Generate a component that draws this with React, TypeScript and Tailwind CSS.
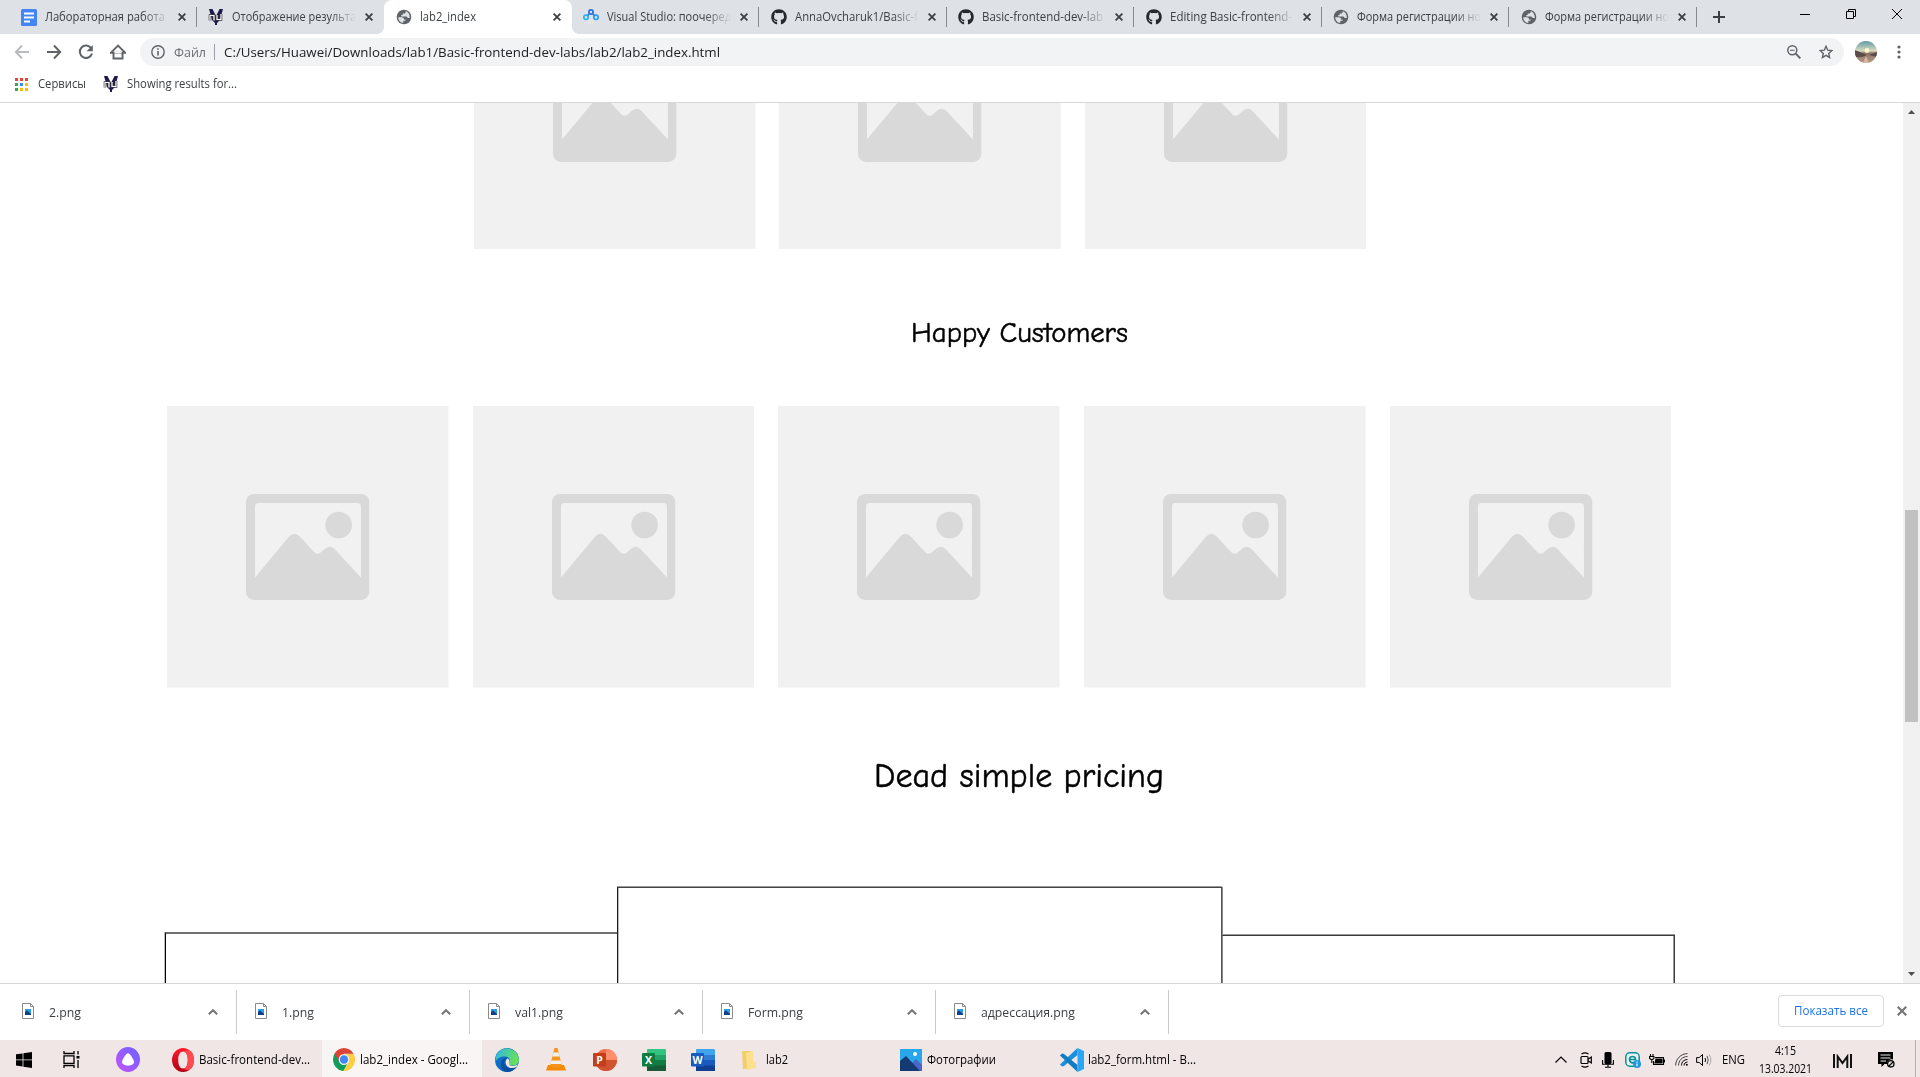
import React, { useLayoutEffect, useRef, useState } from "react";
import { FaGithub } from "react-icons/fa";

/** Single-line label scaled horizontally so that it fills exactly `w` pixels. */
function Fit({ w, children, className = "" }: { w: number; children: string; className?: string }) {
  const ref = useRef<HTMLSpanElement>(null);
  const [scale, setScale] = useState(1);
  useLayoutEffect(() => {
    if (ref.current && ref.current.offsetWidth) {
      setScale(w / ref.current.getBoundingClientRect().width);
    }
  }, []);
  return (
    <span className={"block shrink-0 whitespace-nowrap " + className} style={{ width: w }}>
      <span ref={ref} className="inline-block origin-left" style={{ transform: `scaleX(${scale})` }}>
        {children}
      </span>
    </span>
  );
}

const DocsIcon = () => (
  <svg width="16" height="17" viewBox="0 0 16 17" className="shrink-0">
    <rect width="16" height="17" rx="1.5" fill="#4285f4" />
    <path d="M3 4.5h10M3 8.5h10M3 12.5h6" stroke="#fff" strokeWidth="1.8" />
  </svg>
);

const NuIcon = () => (
  <svg width="16" height="18" viewBox="0 0 16 18" className="shrink-0">
    <path d="M1 1h3.500l3.500 7 3.500-7H15l-3 11-3 3v2H7v-2l-3-3z" fill="#1f1b4d" />
    <path d="M2 12.500V7.500h4V12.500M9 7v4.500h4V6" stroke="#3a3a42" strokeWidth="2.600" fill="none" />
    <path d="M2 12.500V7.500h4V12.500M9 7v4.500h4V6" stroke="#fff" strokeWidth="1.200" fill="none" />
  </svg>
);

const GlobeIcon = () => (
  <svg width="16" height="16" viewBox="0 0 16 16" className="shrink-0">
    <circle cx="8" cy="8" r="7.300" fill="#5f6368" />
    <path
      d="M2.200 8.300h3.600c1.400 0 2.200.8 2.200 2.100h1.500v1.400H7.300v2.300C4.600 13.900 2.300 11.400 2.200 8.300zM9.700 2.100v1c0 .8-.7 1.500-1.600 1.500H6.700v1.500H5.300v1.500h5.100l1.500 1.400h1.900C14 5.800 12.300 3 9.700 2.100z"
      fill="#dee1e6"
    />
  </svg>
);

const CloudIcon = () => (
  <svg width="16" height="16" viewBox="0 0 16 16" className="shrink-0" fill="none" strokeWidth="1.700">
    <circle cx="8" cy="3" r="2.100" stroke="#2b6fd6" />
    <circle cx="3" cy="8.300" r="2.200" stroke="#29b0f5" />
    <circle cx="13" cy="8.300" r="2.200" stroke="#2a9df0" />
    <path d="M6.300 4.800l-1.800 1.600M9.700 4.800l1.800 1.600" stroke="#2b7fe0" />
    <circle cx="8" cy="13" r="2" stroke="#e8e8e8" strokeWidth="1.200" />
  </svg>
);

const GhIcon = () => <FaGithub className="size-4 shrink-0 text-[#24292e]" />;

const Cross = ({ size = 8, color = "#3c4043", sw = 1.8 }: { size?: number; color?: string; sw?: number }) => (
  <svg width={size} height={size} viewBox="0 0 8 8" className="shrink-0">
    <path d="M.6.6l6.800 6.800M7.400.6L.6 7.400" stroke={color} strokeWidth={sw} />
  </svg>
);

type TabDef = { icon: React.ReactNode; title: string; w: number; active?: boolean; sep?: boolean };
const tabs: TabDef[] = [
  { icon: <DocsIcon />, title: "Лабораторная работа", w: 120, sep: true },
  { icon: <NuIcon />, title: "Отображение результа", w: 124 },
  { icon: <GlobeIcon />, title: "lab2_index", w: 56, active: true },
  { icon: <CloudIcon />, title: "Visual Studio: поочеред", w: 124, sep: true },
  { icon: <GhIcon />, title: "AnnaOvcharuk1/Basic-f", w: 123, sep: true },
  { icon: <GhIcon />, title: "Basic-frontend-dev-lab", w: 121, sep: true },
  { icon: <GhIcon />, title: "Editing Basic-frontend-", w: 122, sep: true },
  { icon: <GlobeIcon />, title: "Форма регистрации но", w: 124, sep: true },
  { icon: <GlobeIcon />, title: "Форма регистрации но", w: 124, sep: true },
];

function TabItem({ t }: { t: TabDef }) {
  return (
    <div
      className={
        "relative flex h-[34px] w-[187.500px] shrink-0 items-center pl-[11.500px] " +
        (t.active ? "rounded-t-lg bg-white" : "")
      }
    >
      {t.icon}
      <div
        className={
          "ml-2 w-[124px] " +
          (t.active ? "" : "[mask-image:linear-gradient(to_right,#000_98px,transparent_124px)]")
        }
      >
        <Fit w={t.w} className="text-xs leading-4 text-[#3c4043]">
          {t.title}
        </Fit>
      </div>
      <div className="ml-[9px]">
        <Cross />
      </div>
      {t.sep && <div className="absolute right-0 top-[7px] h-5 w-px bg-[#86898d]" />}
      {t.active && (
        <>
          <div className="absolute -left-2 bottom-0 size-2 bg-[radial-gradient(circle_at_0_0,transparent_8px,#fff_8px)]" />
          <div className="absolute -right-2 bottom-0 size-2 bg-[radial-gradient(circle_at_100%_0,transparent_8px,#fff_8px)]" />
        </>
      )}
    </div>
  );
}

function TabStrip() {
  return (
    <div className="flex h-[34px] items-center bg-[#dee1e6] pl-[9px]">
      {tabs.map((t, i) => (
        <TabItem key={i} t={t} />
      ))}
      <svg width="12" height="12" viewBox="0 0 12 12" className="ml-[16.500px]">
        <path d="M6 0v12M0 6h12" stroke="#3c4043" strokeWidth="2" />
      </svg>
      <div className="mb-[6px] ml-auto flex items-center gap-9 pr-[18px] text-black">
        <svg width="10" height="10" viewBox="0 0 10 10">
          <path d="M0 5.500h10" stroke="#000" />
        </svg>
        <svg width="10" height="10" viewBox="0 0 10 10" fill="none" stroke="#000">
          <path d="M.5 2.500h7v7h-7zM2.500 2.500v-2h7v7h-2" />
        </svg>
        <svg width="10" height="10" viewBox="0 0 10 10">
          <path d="M0 0l10 10M10 0L0 10" stroke="#000" />
        </svg>
      </div>
    </div>
  );
}

function Toolbar() {
  return (
    <div className="flex h-9 items-center bg-white pl-[14px]">
      <div className="flex gap-4">
        <svg width="16" height="16" viewBox="0 0 16 16" fill="none" stroke="#b9bbbe" strokeWidth="1.900">
          <path d="M15 8H2M8 1.500L1.800 8 8 14.500" />
        </svg>
        <svg width="16" height="16" viewBox="0 0 16 16" fill="none" stroke="#5f6368" strokeWidth="2">
          <path d="M1 8h13M8 1.500L14.200 8 8 14.500" />
        </svg>
        <svg width="16" height="16" viewBox="0 0 16 16" fill="none" stroke="#5f6368" strokeWidth="2">
          <path d="M13.200 4.300A6.200 6.200 0 1 0 14 9.500" />
          <path d="M14.800 1v6.200H8.600z" fill="#5f6368" stroke="none" />
        </svg>
        <svg width="16" height="16" viewBox="0 0 16 16" fill="none" stroke="#5f6368" strokeWidth="1.900">
          <path d="M3.500 8v6.500h9V8M1 8.700l7-7 7 7z" />
          <path d="M4.500 8.500h7" stroke="#fff" />
        </svg>
      </div>
      <div className="ml-[14px] flex h-7 w-[1704px] items-center rounded-full bg-[#f1f3f4] pl-[11px] pr-[11px]">
        <svg width="14" height="14" viewBox="0 0 14 14" fill="none" stroke="#5f6368" strokeWidth="1.400">
          <circle cx="7" cy="7" r="6.200" />
          <path d="M7 6v4.500M7 3.300v1.500" strokeWidth="1.600" />
        </svg>
        <Fit w={32} className="ml-[9px] text-[13.500px] leading-5 text-[#6b6f74]">
          Файл
        </Fit>
        <div className="ml-2 h-4 w-px bg-[#9aa0a6]" />
        <Fit w={496} className="ml-[9px] text-[13.500px] leading-5 text-[#202124]">
          C:/Users/Huawei/Downloads/lab1/Basic-frontend-dev-labs/lab2/lab2_index.html
        </Fit>
        <svg width="14" height="14" viewBox="0 0 14 14" fill="none" stroke="#5f6368" className="ml-auto">
          <circle cx="5.300" cy="5.300" r="4.500" strokeWidth="1.500" />
          <path d="M8.700 8.700l4.700 4.700" strokeWidth="1.900" />
          <path d="M3 5.300h4.600" strokeWidth="1.100" />
        </svg>
        <svg width="14" height="14" viewBox="0 0 14 14" fill="none" stroke="#5f6368" strokeWidth="1.400" className="ml-[18px]">
          <path d="M7 1.300l1.700 3.900 4.200.4-3.200 2.800.9 4.200L7 10.400l-3.600 2.200.9-4.200L1.100 5.600l4.200-.4z" />
        </svg>
      </div>
      <svg width="22" height="22" viewBox="0 0 22 22" className="ml-[11px]">
        <defs>
          <clipPath id="avatar">
            <circle cx="11" cy="11" r="11" />
          </clipPath>
          <linearGradient id="sky" x1="0" y1="0" x2="0" y2="1">
            <stop offset="0" stopColor="#5f98a4" />
            <stop offset=".45" stopColor="#d9dcc0" />
            <stop offset=".55" stopColor="#8d7467" />
            <stop offset="1" stopColor="#b59a83" />
          </linearGradient>
        </defs>
        <g clipPath="url(#avatar)">
          <rect width="22" height="22" fill="url(#sky)" />
          <path d="M0 9l7 3 5 2-5 2H0zM22 11l-8 3 8 2z" fill="#5a4c4a" />
          <circle cx="12" cy="9.500" r="2.400" fill="#fff6d0" />
          <path d="M8 22l3-7 3 7z" fill="#d8b7a6" />
        </g>
      </svg>
      <svg width="4" height="14" viewBox="0 0 4 14" fill="#5f6368" className="ml-[20px]">
        <circle cx="2" cy="2" r="1.600" />
        <circle cx="2" cy="7" r="1.600" />
        <circle cx="2" cy="12" r="1.600" />
      </svg>
    </div>
  );
}

const appColors = [
  "bg-[#ea4335]",
  "bg-[#ea4335]",
  "bg-[#ea4335]",
  "bg-[#34a853]",
  "bg-[#4285f4]",
  "bg-[#fbbc04]",
  "bg-[#34a853]",
  "bg-[#fbbc04]",
  "bg-[#fbbc04]",
];

function Bookmarks() {
  return (
    <div className="flex h-[33px] items-center border-b border-[#d5d7da] bg-white pb-1 pl-[15px]">
      <div className="grid grid-cols-3 gap-[2px]">
        {appColors.map((c, i) => (
          <div key={i} className={"size-[3px] " + c} />
        ))}
      </div>
      <Fit w={48} className="ml-[10px] text-xs leading-4 text-[#3c4043]">
        Сервисы
      </Fit>
      <div className="ml-[17px]">
        <NuIcon />
      </div>
      <Fit w={110} className="ml-2 text-xs leading-4 text-[#3c4043]">
        Showing results for...
      </Fit>
    </div>
  );
}

function Placeholder() {
  return (
    <svg width="281.600" height="281.600" viewBox="0 0 845 845" className="block shrink-0">
      <rect width="845" height="845" fill="#f1f1f1" />
      <rect x="237" y="264" width="370" height="318" rx="24" fill="#d9d9d9" />
      <path
        d="M274 291H571Q582 291 582 302V515L502 428Q489 417 476 427L462 439Q452 448 442 439L399 392Q382 375 366 392L264 515V302Q264 291 274 291Z"
        fill="#f1f1f1"
      />
      <circle cx="515" cy="357" r="40" fill="#d9d9d9" />
    </svg>
  );
}

function Page() {
  return (
    <main className="h-[880px] w-[1903px] overflow-hidden bg-white">
      <div className="-mt-[135.300px] flex gap-[23.600px] pl-[474.200px]">
        {[0, 1, 2].map((i) => (
          <Placeholder key={i} />
        ))}
      </div>
      <h2 className="mt-[63px] flex h-10 items-center pl-[911px] font-['Comic_Sans_MS','Comic_Neue','Open_Sans',sans-serif] text-[29px] text-black [-webkit-text-stroke:0.5px_#000]">
        <Fit w={217}>Happy Customers</Fit>
      </h2>
      <div className="mt-[53.900px] flex gap-[24.100px] pl-[167px]">
        {[0, 1, 2, 3, 4].map((i) => (
          <Placeholder key={i} />
        ))}
      </div>
      <h2 className="mt-16 flex h-12 items-center pl-[874px] font-['Comic_Sans_MS','Comic_Neue','Open_Sans',sans-serif] text-[35px] text-black [-webkit-text-stroke:0.5px_#000]">
        <Fit w={290}>Dead simple pricing</Fit>
      </h2>
      <div className="mt-[86.800px] flex items-start pl-[165px]">
        <div className="mt-[45px] h-60 w-[452px] border-l border-t-2 border-l-black border-t-[#707070] shadow-[-1px_0_0_#bbb]" />
        <div className="h-72 w-[605px] border border-b-0 border-l-[#1c1c1c] border-r-[#555] border-t-[#444] shadow-[0_-1px_0_#999,1px_0_0_#888,inset_1px_0_0_#bbb]" />
        <div className="mt-12 h-60 w-[453px] border-r border-t border-[#3c3c3c] shadow-[0_-1px_0_#999,inset_-1px_0_0_#999]" />
      </div>
    </main>
  );
}

function Scrollbar() {
  return (
    <div className="flex h-[880px] w-[17px] flex-col items-center bg-[#f1f1f1] pt-[7px]">
      <svg width="7" height="4" viewBox="0 0 7 4">
        <path d="M0 4L3.500 0 7 4z" fill="#505050" />
      </svg>
      <div className="mt-[396px] h-[212px] w-[13px] bg-[#c1c1c1]" />
      <svg width="7" height="4" viewBox="0 0 7 4" className="mb-[7px] mt-auto">
        <path d="M0 0l3.500 4L7 0z" fill="#505050" />
      </svg>
    </div>
  );
}

const downloads = [
  { name: "2.png", w: 32 },
  { name: "1.png", w: 32 },
  { name: "val1.png", w: 48 },
  { name: "Form.png", w: 55 },
  { name: "адрессация.png", w: 94 },
];

function Downloads() {
  return (
    <div className="flex h-[57px] items-center border-t border-[#d5d7da] bg-white pl-[4px]">
      {downloads.map((d) => (
        <div key={d.name} className="flex h-11 w-[233px] items-center border-r border-[#c9cbce] pl-[18px] pr-[18px]">
          <svg width="12" height="16" viewBox="0 0 12 16" className="-mt-[3px]">
            <path d="M.5.500h8l3 3v12H.500z" fill="#fff" stroke="#8b8b8b" />
            <path d="M8.500.500v3h3" fill="none" stroke="#8b8b8b" />
            <rect x="3" y="6" width="6" height="6" fill="#2a9be6" />
            <path d="M3 12V9l2-1.500L9 11v1z" fill="#123f80" />
          </svg>
          <Fit w={d.w} className="ml-[15px] text-[13px] leading-5 text-[#3c4043]">
            {d.name}
          </Fit>
          <svg width="10" height="6" viewBox="0 0 10 6" fill="none" stroke="#757575" strokeWidth="2" className="ml-auto">
            <path d="M.8 5.300L5 1.200l4.200 4.100" />
          </svg>
        </div>
      ))}
      <div className="-mt-0.5 ml-auto flex h-8 w-[106px] items-center justify-center rounded border border-[#dadce0]">
        <Fit w={74} className="text-xs font-medium leading-4 text-[#1a73e8]">
          Показать все
        </Fit>
      </div>
      <div className="mb-0.5 ml-[13px] mr-[13px]">
        <Cross size={10} color="#757575" sw={1.7} />
      </div>
    </div>
  );
}

const Office = ({ letter, tile, bands }: { letter: string; tile: string; bands: string[] }) => (
  <svg width="24" height="22" viewBox="0 0 24 22" className="shrink-0">
    {letter === "P" ? (
      <>
        <circle cx="13" cy="11" r="11" fill={bands[0]} />
        <path d="M13 0a11 11 0 0 1 11 11H13z" fill={bands[1]} />
        <path d="M2 11h22a11 11 0 0 1-22 0z" fill={bands[2]} />
      </>
    ) : (
      <>
        <rect x="5" width="19" height="22" rx="1" fill={bands[0]} />
        <path d="M5 6h19v16H5z" fill={bands[1]} />
        <path d="M5 11h19v11H5z" fill={bands[2]} />
        <path d="M5 16.500h19V22H5z" fill={bands[3]} />
      </>
    )}
    <rect y="4" width="13" height="13.500" rx="1" fill={tile} />
    <text x="6.500" y="14.500" textAnchor="middle" fontSize="10.500" fontWeight="700" fill="#fff" fontFamily="Open Sans, sans-serif">
      {letter}
    </text>
  </svg>
);

function Taskbar() {
  return (
    <div className="flex h-[37px] bg-[#f1e6e6] text-[12.500px] leading-4 text-black">
      <div className="flex w-[322px] items-center pl-4 pt-0.5">
        <svg width="16" height="16" viewBox="0 0 16 16">
          <path d="M0 2.300l6.600-.9v6.100H0zM7.400 1.300L16 0v7.500H7.400zM0 8.300h6.600v6.200L0 13.600zM7.400 8.300H16V16l-8.600-1.200z" />
        </svg>
        <svg width="17" height="17" viewBox="0 0 17 17" fill="none" stroke="#000" strokeWidth="1.300" className="ml-[31px]">
          <path d="M1 0v2.500h10V0M1 4.800h10v7.500H1zM1 17v-2.500h10V17M15 0v3.500M15 9v8" />
          <path d="M13.500 5h3v2.500h-3z" fill="#000" stroke="none" />
        </svg>
        <svg width="24" height="25" viewBox="0 0 24 24" preserveAspectRatio="none" className="ml-9">
          <defs>
            <linearGradient id="alice" x1="1" y1="0" x2="0" y2="1">
              <stop offset="0" stopColor="#6a62ff" />
              <stop offset="1" stopColor="#c454ff" />
            </linearGradient>
          </defs>
          <circle cx="12" cy="12" r="12" fill="url(#alice)" />
          <path d="M12 6c2 0 6 6.500 6 8.500S15.500 18 12 18s-6-1.500-6-3.500S10 6 12 6z" fill="#fff" />
        </svg>
        <svg width="22" height="24" viewBox="0 0 22 24" className="ml-8">
          <defs>
            <linearGradient id="opera" x1="0" y1="0" x2="0" y2="1">
              <stop offset="0" stopColor="#ff1b2d" />
              <stop offset="1" stopColor="#b00014" />
            </linearGradient>
          </defs>
          <path
            fillRule="evenodd"
            d="M11 0a11 12 0 1 0 0 24 11 12 0 0 0 0-24zm0 3.500c3 0 4.800 3.500 4.800 8.500s-1.800 8.500-4.800 8.500S6.200 17 6.200 12 8 3.500 11 3.500z"
            fill="url(#opera)"
          />
          <path d="M11 3.500c3-2 6-1.500 8-.5 2 2 3 5.500 3 9s-1 7-3 9c-2 1-5 1.500-8-.5 3 0 4.800-3.500 4.800-8.500S14 3.500 11 3.500z" fill="#ff4a50" />
        </svg>
        <Fit w={111} className="ml-[5px]">
          Basic-frontend-dev...
        </Fit>
      </div>
      <div className="flex w-40 items-center bg-[#f9f5f5] pl-[11px] pt-0.5">
        <svg width="22" height="23" viewBox="0 0 22 22" preserveAspectRatio="none">
          <path d="M11 11L1.500 5.500a11 11 0 0 0 9 16.500l4.500-8z" fill="#0f9d58" />
          <path d="M11 5.500h9.500A11 11 0 0 1 10.500 22L15.800 13.500z" fill="#ffcd40" />
          <path d="M1.500 5.500a11 11 0 0 1 19 0H11L6.500 13.500z" fill="#db4437" />
          <circle cx="11" cy="11" r="5.300" fill="#f1f1f1" />
          <circle cx="11" cy="11" r="4.100" fill="#4285f4" />
        </svg>
        <Fit w={108} className="ml-[5px]">
          lab2_index - Googl...
        </Fit>
      </div>
      <div className="flex flex-1 items-center pl-[13px] pt-0.5">
        <svg width="24" height="24" viewBox="0 0 24 24">
          <defs>
            <linearGradient id="edgeTop" x1="0" y1="0" x2="1" y2=".3">
              <stop offset="0" stopColor="#2fb5ea" />
              <stop offset="1" stopColor="#66e05a" />
            </linearGradient>
          </defs>
          <circle cx="12" cy="12" r="12" fill="#0f6fc4" />
          <path d="M.5 9A12 12 0 0 1 24 11.500c0 4-3 6-6.500 6-3 0-4.500-1-3-3 1.500-3-1-6-5-6C5.500 8.500 2 10 .5 14z" fill="url(#edgeTop)" />
          <path d="M13 9.500c-4 1-5 6-1.500 9 3 2.500 7 2 10.500-.5-1 2.500-5 6-10 6C5 24 4 14 9 10.500c1.500-1 3-1.200 4-1z" fill="#0c4f9e" />
          <path d="M12.500 10.500c2 1 2.500 3 1.700 4.500-.7 2 1 3.500 4 3 3-.3 4.800-1.500 5.300-3l-2 4c-3 1.500-7 1.500-9-.5-2.500-2.500-2.500-6 0-8z" fill="#f1e6e6" />
        </svg>
        <svg width="20" height="23" viewBox="0 0 20 23" className="ml-[27px]">
          <path d="M2 17h16l2 5.500H0z" fill="#f58a07" />
          <path d="M8.500 0h3L16 18c-3 2-9 2-12 0z" fill="#f7941d" />
          <path d="M7.500 4.500h5l1 4h-7zM5.400 12.500h9.200l.9 3.500h-11z" fill="#f0f0ee" />
        </svg>
        <div className="ml-[27px] flex gap-[25px]">
          <Office letter="P" tile="#c43e1c" bands={["#ed6c47", "#ff8f6b", "#d35230"]} />
          <Office letter="X" tile="#107c41" bands={["#33c481", "#21a366", "#107c41", "#185c37"]} />
          <Office letter="W" tile="#185abd" bands={["#41a5ee", "#2b7cd3", "#185abd", "#103f91"]} />
        </div>
        <svg width="14" height="20" viewBox="0 0 14 20" className="ml-[27px]">
          <path d="M0 1h9v18H1z" fill="#f3cd6a" />
          <path d="M4 3l7-2v10l3 1v6l-9 2z" fill="#fde08e" />
        </svg>
        <Fit w={22} className="ml-[10px]">
          lab2
        </Fit>
        <svg width="22" height="22" viewBox="0 0 22 22" className="ml-28">
          <rect width="22" height="22" fill="#28a8ea" />
          <path d="M12 14l4-4 6 6v6H12z" fill="#4b64c8" />
          <path d="M0 12l6-5 14 15H0z" fill="#143a74" />
          <circle cx="15" cy="5" r="2" fill="#fff" />
        </svg>
        <Fit w={69} className="ml-[5px]">
          Фотографии
        </Fit>
        <svg width="24" height="24" viewBox="0 0 24 24" className="ml-16">
          <path d="M17.500 0v7L4 18l-2 .5-2-2L17.500 0z" fill="#1a90dc" />
          <path d="M17.500 24v-7L4 6l-2-.5-2 2L17.500 24z" fill="#0f7cc4" />
          <path d="M17.500 0L24 3v18l-6.500 3z" fill="#2ba5f5" />
        </svg>
        <Fit w={108} className="ml-1">
          lab2_form.html - B...
        </Fit>
      </div>
      <div className="flex w-[365px] items-center pt-0.5">
        <svg width="12" height="7" viewBox="0 0 12 7" fill="none" stroke="#000" strokeWidth="1.200">
          <path d="M.5 6.500L6 1l5.500 5.500" />
        </svg>
        <svg width="12" height="16" viewBox="0 0 12 16" fill="none" stroke="#000" strokeWidth="1.200" className="ml-[13px]">
          <rect x="1" y="4.500" width="7" height="7" rx="1" />
          <path d="M8 7.200L11.300 5v6L8 8.800M1.500 2Q5-.2 8.500 2M1.500 14q3.500 2.200 7 0" />
        </svg>
        <svg width="12" height="16" viewBox="0 0 12 16" className="ml-[10px]">
          <rect x="2.500" width="7" height="12" rx="1.500" />
          <path d="M.6 8v4.300h10.800V8M6 12v3.300M3 15.300h6" fill="none" stroke="#000" strokeWidth="1.100" />
        </svg>
        <svg width="16" height="16" viewBox="0 0 16 16" className="ml-[11px]">
          <rect x=".8" y=".8" width="13.400" height="13.400" rx="4" fill="#e7f3f3" stroke="#0e8f98" strokeWidth="1.500" />
          <path d="M4.500 7.500h6C10.500 3.500 4.500 3.500 4.500 7.500c0 3.500 3.500 4 5.500 2.500" fill="none" stroke="#0e8f98" strokeWidth="1.700" />
          <circle cx="12" cy="12" r="4" fill="#2196e3" />
          <path d="M12 11.500v2.700M12 9.500v1.200" stroke="#fff" strokeWidth="1.200" />
        </svg>
        <svg width="16" height="12" viewBox="0 0 16 12" className="ml-[8px]" fill="none" stroke="#000" strokeWidth="1.100">
          <path d="M6 3.500h8.500v7H4.500V7" />
          <path d="M7 5h6v4H6z" fill="#000" />
          <path d="M15.500 5.500v3M1.500 0v2.500M4 0v2.500M.6 2.500h4.300v2L2.800 6 .6 4.500zM2.800 6v3" />
        </svg>
        <svg width="13" height="13" viewBox="0 0 13 13" fill="none" stroke="#000" className="ml-[10px]">
          <path d="M.6 12.500C.6 6 6 .6 12.500.6M3.500 12.500c0-5 4-9 9-9" stroke="#444" />
          <path d="M6.500 12.500c0-3.500 2.500-6 6-6M9 12.500c0-2 1.500-3.500 3.500-3.500" />
          <circle cx="11.800" cy="11.800" r="1" fill="#000" stroke="none" />
        </svg>
        <svg width="16" height="14" viewBox="0 0 16 14" fill="none" stroke="#000" className="ml-2">
          <path d="M.6 4.600h2.600L6.500 1.500v11L3.200 9.400H.6zM9 5q1.200 2 0 4" />
          <path d="M11 3q2.500 4 0 8" stroke="#555" />
          <path d="M13 1.500q4 5.500 0 11" stroke="#aaa" />
        </svg>
        <Fit w={23} className="ml-[10px]">
          ENG
        </Fit>
        <div className="ml-[13px] flex w-[54px] flex-col items-center gap-[1px] leading-[17px]">
          <Fit w={21}>4:15</Fit>
          <Fit w={53}>13.03.2021</Fit>
        </div>
        <svg width="19" height="14" viewBox="0 0 19 14" fill="none" stroke="#111" strokeWidth="2" className="ml-[21px] mt-0.5">
          <path d="M1 0v14M18 0v14M4.700 14V2.500l4.800 6.500 4.800-6.500V14" />
        </svg>
        <svg width="17" height="16" viewBox="0 0 17 16" className="ml-[26px]">
          <path d="M0 0h15v7.500a4.500 4.500 0 0 0-6 4.500H6.500L3.500 15v-3H0z" />
          <path d="M2.500 3h10M2.500 6h10M2.500 9H8" stroke="#f1e6e6" />
          <circle cx="12.800" cy="11.800" r="3.200" fill="none" stroke="#000" strokeWidth="1.300" />
          <path d="M11 14l4-4" stroke="#000" strokeWidth="1.200" />
        </svg>
        <div className="-mt-0.5 ml-auto mr-1 h-[37px] w-px bg-[#b9b0b0]" />
      </div>
    </div>
  );
}

export default function App() {
  return (
    <div className="flex h-[1077px] w-[1920px] flex-col overflow-hidden bg-white font-['Open_Sans','Noto_Sans',sans-serif]">
      <TabStrip />
      <Toolbar />
      <Bookmarks />
      <div className="flex h-[880px] shrink-0">
        <Page />
        <Scrollbar />
      </div>
      <Downloads />
      <Taskbar />
    </div>
  );
}
